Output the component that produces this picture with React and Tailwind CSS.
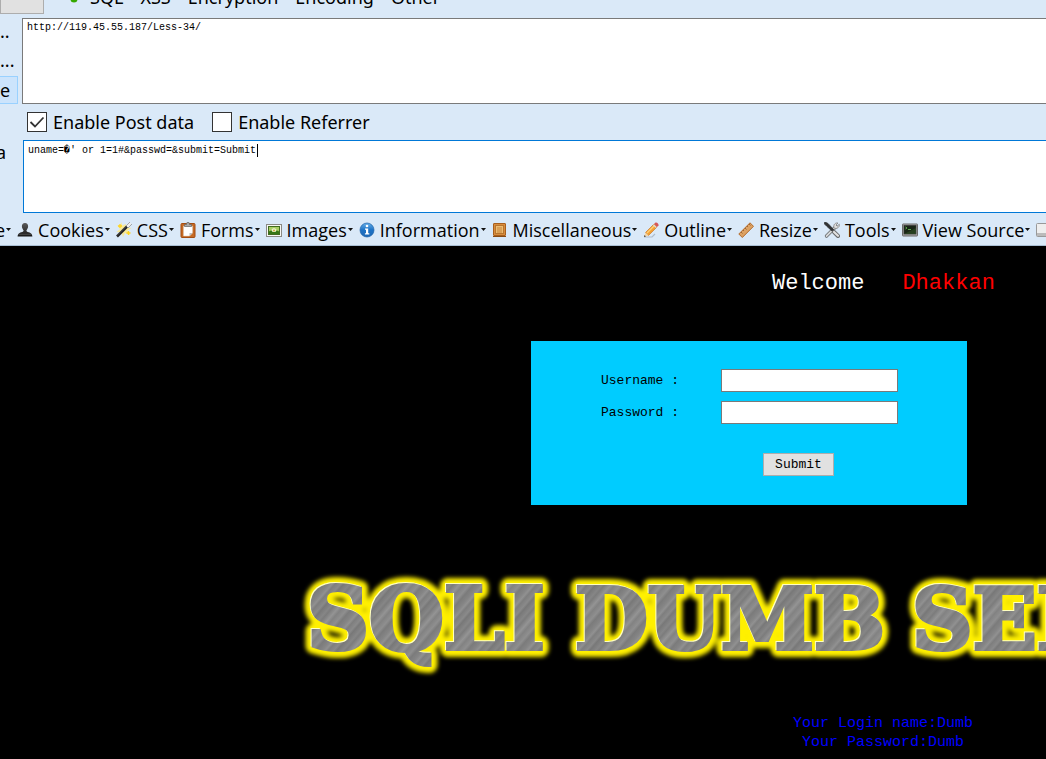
import React from "react";

const icon = "h-4 w-4 shrink-0";

function CookiesIcon() {
  return (
    <svg viewBox="0 0 16 16" className={icon} aria-hidden="true">
      <defs>
        <linearGradient id="person" x1="0" y1="0" x2="0" y2="1">
          <stop offset="0" stopColor="#5a5a5a" />
          <stop offset="1" stopColor="#161616" />
        </linearGradient>
      </defs>
      <path d="M8 1C5.900 1 4.700 2.500 4.900 4.600C5 6.300 5.800 7.300 6.500 8.200C6.700 9 6.200 9.500 5.200 9.900C2.500 10.700.8 11.300.6 14.500H15.400C15.200 11.300 13.500 10.700 10.800 9.900C9.800 9.500 9.300 9 9.500 8.200C10.200 7.300 11 6.300 11.100 4.600C11.300 2.500 10.100 1 8 1Z" fill="url(#person)" />
      <path d="M1.500 12.300H14.500" stroke="#666" strokeWidth=".6" />
    </svg>
  );
}

function CssIcon() {
  return (
    <svg viewBox="0 0 16 16" className={icon} aria-hidden="true">
      <path d="M5 0L6.500 3.500L10 2L9.500 5.500L15.500 6L11.500 8.500L14 13L9 11L7 15L5.500 10.500L.5 10L4 7L1 3.500L4.500 4Z" fill="#fce98a" opacity=".85" />
      <path d="M4 2V6M2 4H6M12.500 9V13M10.500 11H14.500" stroke="#ffd51e" strokeWidth="1.300" />
      <path d="M1 14.500L11 4.500" stroke="#222" strokeWidth="2.600" />
      <path d="M11 4.500L14.500 1" stroke="#eee" strokeWidth="2.600" />
      <path d="M10 4L14 0M12 6L16 2" stroke="#777" strokeWidth=".6" />
      <path d="M1 13.500L10.500 4" stroke="#777" strokeWidth=".6" />
    </svg>
  );
}

function FormsIcon() {
  return (
    <svg viewBox="0 0 16 16" className={icon} aria-hidden="true">
      <rect x="1" y="1.500" width="14" height="14" rx="1" fill="#c66b25" stroke="#a34d12" />
      <path d="M3.500 4H12.500V11L9.500 14H3.500Z" fill="#fff" stroke="#d9c8b8" strokeWidth=".5" />
      <path d="M12.500 11H9.500V14Z" fill="#bcbcbc" />
      <path d="M4.500 4.500V2.500H6.500L7 .5H9L9.500 2.500H11.500V4.500Z" fill="#aaa" stroke="#666" strokeWidth=".7" />
    </svg>
  );
}

function ImagesIcon() {
  return (
    <svg viewBox="0 0 16 16" className={icon} aria-hidden="true">
      <rect x=".5" y="2.500" width="15" height="12" fill="#f8f8f5" stroke="#8a8a85" />
      <rect x="2.500" y="4.500" width="11" height="8" fill="#a9ce63" stroke="#416b20" />
      <path d="M3 12V9.500C5 8 6 8.500 8 9.500C10 8 11.500 8 13 9.500V12Z" fill="#357616" />
      <path d="M5.500 8C6 5.500 10 5.500 10.500 8L9.500 10H6.500Z" fill="#e8f2cc" />
      <circle cx="8" cy="8.500" r="1" fill="#d3a23b" />
    </svg>
  );
}

function InformationIcon() {
  return (
    <svg viewBox="0 0 16 16" className={icon} aria-hidden="true">
      <defs>
        <linearGradient id="blueball" x1="0" y1="0" x2="0" y2="1">
          <stop offset="0" stopColor="#65aee8" />
          <stop offset=".5" stopColor="#1d72c5" />
          <stop offset="1" stopColor="#1e69b6" />
        </linearGradient>
      </defs>
      <circle cx="8" cy="8" r="7" fill="url(#blueball)" stroke="#1d62a9" strokeWidth=".7" />
      <circle cx="8" cy="4" r="1.300" fill="#fff" />
      <path d="M6 6.500H9.200V11.300H10.300V12.500H5.900V11.300H7V7.700H6Z" fill="#fff" />
    </svg>
  );
}

function MiscellaneousIcon() {
  return (
    <svg viewBox="0 0 16 16" className={icon} aria-hidden="true">
      <rect x="1.500" y="1.500" width="12" height="12" rx=".5" fill="#d88c3d" stroke="#a85f1c" />
      <rect x="3.500" y="3.500" width="8" height="8" fill="#edbc72" stroke="#b8752e" />
      <path d="M5 6H10M5 8H10M5 10H10" stroke="#c58338" />
      <path d="M1 14.500H14" stroke="#874a13" />
    </svg>
  );
}

function OutlineIcon() {
  return (
    <svg viewBox="0 0 16 16" className={icon} aria-hidden="true">
      <path d="M1 15H9L12 12" stroke="#aebccb" strokeWidth="1.200" fill="none" />
      <path d="M2.500 10.500L11 2L14 5L5.500 13.500Z" fill="#f2a033" stroke="#c66d19" strokeWidth=".6" />
      <path d="M4 11L12 3" stroke="#ffd078" strokeWidth="1.200" />
      <path d="M11 2L12.500.5C14 0 16 2 15.500 3.500L14 5Z" fill="#d65757" />
      <path d="M10.300 2.700L13.300 5.700" stroke="#ddd" strokeWidth="1.200" />
      <path d="M2.500 10.500L1 15L5.500 13.500Z" fill="#f5d6a5" />
      <path d="M1 15L1.600 13.100L2.900 14.400Z" fill="#333" />
    </svg>
  );
}

function ResizeIcon() {
  return (
    <svg viewBox="0 0 16 16" className={icon} aria-hidden="true">
      <path d="M.8 12L12 .8L15.500 4.300L4.300 15.500Z" fill="#dda263" stroke="#b26b2c" />
      <path d="M3 10L4.500 11.500M5 8L6 9M7 6L8.500 7.500M9 4L10 5M11 2L12.500 3.500" stroke="#8d5729" strokeWidth=".8" />
    </svg>
  );
}

function ToolsIcon() {
  return (
    <svg viewBox="0 0 16 16" className={icon} aria-hidden="true">
      <path d="M2.500 14L12 4.500" stroke="#5f6265" strokeWidth="3.200" strokeLinecap="round" />
      <path d="M2.500 14L12 4.500" stroke="#d4d6d8" strokeWidth="1.800" strokeLinecap="round" />
      <path d="M10 5.800C9 2.500 11.500.5 14 1L12 3L13.200 4.200L15.300 2.200C16 5 13 7.200 10.500 6.200Z" fill="#ddd" stroke="#777" strokeWidth=".7" />
      <path d="M1 0L4 1.500L10 8L8.500 9.500L2.500 4L0 1.500Z" fill="#303234" stroke="#303234" strokeWidth=".8" />
      <path d="M10 10L14 14" stroke="#67696b" strokeWidth="4" strokeLinecap="round" />
      <path d="M10 10L14 13.700" stroke="#e1e1e1" strokeWidth="2.200" strokeLinecap="round" />
    </svg>
  );
}

function SourceIcon() {
  return (
    <svg viewBox="0 0 16 16" className={icon} aria-hidden="true">
      <rect x=".5" y="2" width="15" height="12" rx=".5" fill="#aaa" stroke="#696969" />
      <rect x="2" y="3.500" width="12" height="8.500" fill="#182516" stroke="#333" strokeWidth=".7" />
      <path d="M3.500 5L5 6L3.500 7M6 7.500H9" fill="none" stroke="#65b956" strokeWidth=".9" />
      <path d="M2 12L14 6V12Z" fill="#315127" opacity=".6" />
    </svg>
  );
}

function PageIcon() {
  return (
    <svg viewBox="0 0 16 16" className={icon} aria-hidden="true">
      <rect x=".5" y="1.500" width="15" height="13" rx="1" fill="#eee" stroke="#999" />
      <path d="M1 11H15V14H1Z" fill="#bbb" />
    </svg>
  );
}

const tools = [
  ["Cookies", CookiesIcon],
  ["CSS", CssIcon],
  ["Forms", FormsIcon],
  ["Images", ImagesIcon],
  ["Information", InformationIcon],
  ["Miscellaneous", MiscellaneousIcon],
  ["Outline", OutlineIcon],
  ["Resize", ResizeIcon],
  ["Tools", ToolsIcon],
  ["View Source", SourceIcon],
];

function Arrow() {
  return (
    <svg viewBox="0 0 5 3" className="h-[3px] w-[5px] shrink-0" aria-hidden="true">
      <path d="M0 0H5L2.500 3Z" fill="#111" />
    </svg>
  );
}

function Banner() {
  const words = (
    <>
      <text x="17" y="79" fontSize="86">SQLI</text>
      <text x="285" y="79" fontSize="84">DUMB</text>
      <text x="622" y="79" fontSize="84">SERIES</text>
    </>
  );
  return (
    <svg
      role="img"
      aria-label="SQLI DUMB SERIES"
      className="block h-[110px] w-[1160px] max-w-none shrink-0"
      viewBox="0 0 1160 110"
      fontFamily="'DejaVu Serif', serif"
      fontWeight="700"
    >
      <defs>
        <linearGradient id="metal" gradientUnits="userSpaceOnUse" spreadMethod="repeat" x1="0" y1="0" x2="29" y2="25">
          <stop offset="0" stopColor="#858585" />
          <stop offset=".07" stopColor="#919191" />
          <stop offset=".13" stopColor="#7e7e7e" />
          <stop offset=".24" stopColor="#8a8a8a" />
          <stop offset=".3" stopColor="#787878" />
          <stop offset=".42" stopColor="#868686" />
          <stop offset=".48" stopColor="#7c7c7c" />
          <stop offset=".6" stopColor="#949494" />
          <stop offset=".68" stopColor="#828282" />
          <stop offset=".8" stopColor="#8f8f8f" />
          <stop offset=".88" stopColor="#7b7b7b" />
          <stop offset="1" stopColor="#858585" />
        </linearGradient>
        <filter id="glow" x="-5%" y="-20%" width="110%" height="140%">
          <feGaussianBlur stdDeviation="2" />
        </filter>
      </defs>
      <g fill="#ff0" stroke="#fff000" strokeWidth="16" strokeLinejoin="round" filter="url(#glow)" aria-hidden="true">
        {words}
      </g>
      <g transform="translate(-1 -1)" fill="#ffffc0" stroke="#ffffc0" strokeWidth="4" aria-hidden="true">
        {words}
      </g>
      <g fill="url(#metal)" stroke="url(#metal)" strokeWidth="4" aria-hidden="true">
        {words}
      </g>
    </svg>
  );
}

const box =
  "block w-full resize-none border-y border-l bg-white px-1 font-['Liberation_Mono',monospace] text-[10px] leading-[14px] text-black outline-none";
const field = "h-[23px] w-[177px] border border-[#7a7a7a] bg-white px-1 text-[13px] outline-none";

export default function App() {
  return (
    <div className="flex min-h-screen flex-col overflow-hidden bg-black">
      <header className="border-b border-[#a9bfd4] bg-[#dae9f8] font-['Noto_Sans','Open_Sans',sans-serif] text-[18px] leading-6 text-black">
        <div className="flex h-[18px] items-end overflow-hidden">
          <div className="mb-[4px] h-6 w-11 shrink-0 border border-[#adadad] bg-[#e1e1e1]" />
          <nav className="mb-[9px] flex items-end gap-3 pl-[26px]" aria-label="HackBar">
            <svg viewBox="0 0 8 8" className="mb-[6px] h-2 w-2" aria-hidden="true">
              <circle cx="4" cy="4" r="3.500" fill="#35a800" />
            </svg>
            <div className="flex gap-[17px]">
              {["SQL", "XSS", "Encryption", "Encoding", "Other"].map((name) => (
                <button key={name} type="button">{name}</button>
              ))}
            </div>
          </nav>
        </div>

        <div className="flex">
          <div className="flex w-[22px] shrink-0 flex-col">
            <span className="h-[29px] pt-px">..</span>
            <span className="h-[29px] pt-px">...</span>
            <span className="mr-1 h-7 border border-l-0 border-[#99d1ff] bg-[#cce4fc] leading-[26px]">e</span>
          </div>
          <textarea
            aria-label="Request address"
            className={box + " h-[86px] border-[#7a7a7a] py-[2px]"}
            defaultValue="http://119.45.55.187/Less-34/"
          />
        </div>

        <div className="flex h-9 items-center gap-[18px] pl-[27px]">
          {[["Enable Post data", true], ["Enable Referrer", false]].map(([name, on]) => (
            <label key={name} className="flex items-center gap-[6px]">
              <span className="grid h-5 w-5">
                <input
                  type="checkbox"
                  defaultChecked={on}
                  className="peer col-start-1 row-start-1 h-5 w-5 appearance-none border border-[#333] bg-white"
                />
                <svg viewBox="0 0 20 20" className="invisible col-start-1 row-start-1 h-5 w-5 peer-checked:visible" aria-hidden="true">
                  <path d="M3.500 10L8 14.500L16.500 5.500" fill="none" stroke="#333" strokeWidth="1.800" />
                </svg>
              </span>
              {name}
            </label>
          ))}
        </div>

        <div className="flex">
          <span className="w-[23px] shrink-0 -indent-[4px]">a</span>
          <div className="relative flex-1">
            <textarea
              aria-label="Post data"
              className={box + " h-[73px] border-[#0078d7] py-[3px]"}
              defaultValue="uname=�' or 1=1#&passwd=&submit=Submit"
            />
            <span className="absolute left-[234px] top-1 h-[13px] w-px bg-black" />
          </div>
        </div>

        <div className="flex h-8 items-center gap-[6px] overflow-hidden whitespace-nowrap pt-px font-['Open_Sans','Noto_Sans',sans-serif]">
          <span className="flex items-center gap-px">
            <span className="-ml-[5px]">e</span>
            <Arrow />
          </span>
          {tools.map(([name, Icon]) => (
            <button key={name} type="button" className="flex shrink-0 items-center gap-px">
              <Icon />
              <span className="pl-1">{name}</span>
              <Arrow />
            </button>
          ))}
          <PageIcon />
        </div>
      </header>

      <main className="flex flex-1 flex-col overflow-hidden font-['Liberation_Mono',monospace]">
        <h1 className="flex gap-[38px] whitespace-nowrap pl-[772px] pt-[22px] text-[22px] leading-8 text-white">
          <span>Welcome</span>
          <span className="text-[#f00]">Dhakkan</span>
        </h1>

        <form
          className="ml-[531px] mt-[41px] flex h-[164px] w-[436px] flex-col gap-[9px] bg-[#0cf] pl-[70px] pt-7 text-[13px] text-black"
          onSubmit={(e) => e.preventDefault()}
        >
          <div className="flex items-center">
            <label htmlFor="uname" className="w-[120px]">Username :</label>
            <input id="uname" type="text" className={field} />
          </div>
          <div className="flex items-center">
            <label htmlFor="passwd" className="w-[120px]">Password :</label>
            <input id="passwd" type="password" className={field} />
          </div>
          <button type="submit" className="ml-[162px] mt-5 h-[23px] w-[71px] border border-[#adadad] bg-[#e1e1e1]">
            Submit
          </button>
        </form>

        <div className="ml-[290px] mt-[65px]">
          <Banner />
        </div>

        <p className="ml-[683px] mt-[34px] w-[400px] text-center text-[15px] leading-[19px] text-[#00f]">
          Your Login name:Dumb
          <br />
          Your Password:Dumb
        </p>
      </main>
    </div>
  );
}
